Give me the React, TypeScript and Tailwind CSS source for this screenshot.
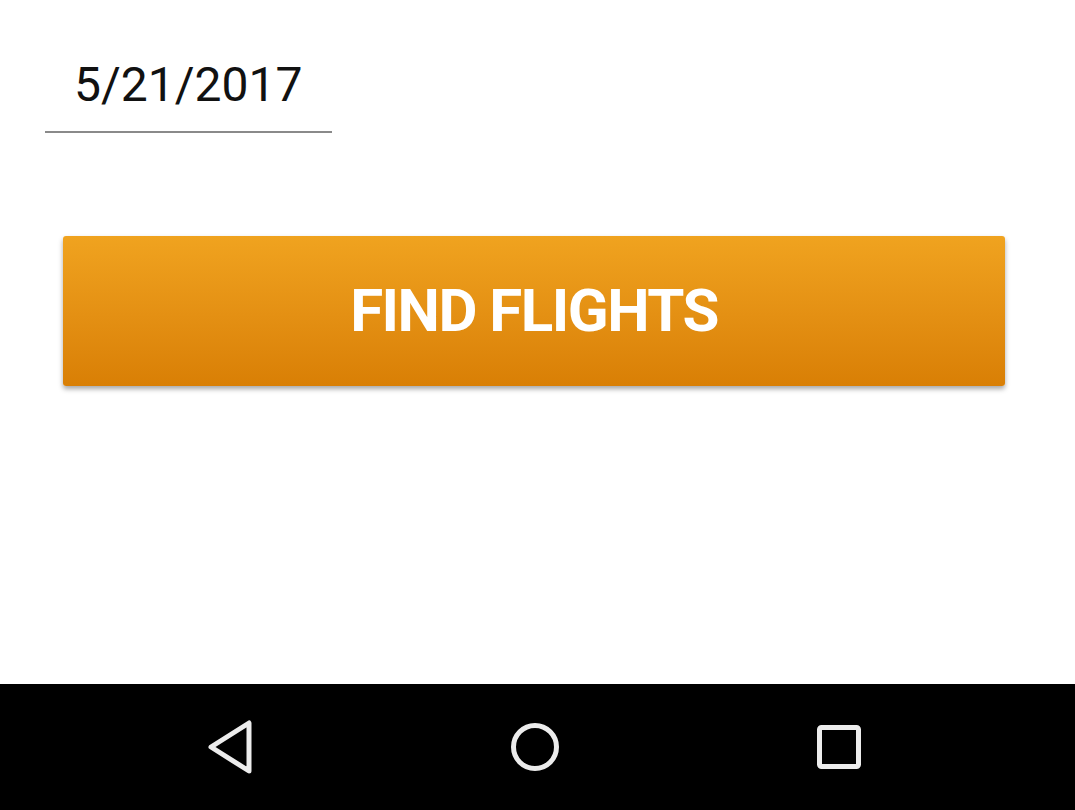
export default function App() {
  return (
    <div className="flex h-[810px] w-[1075px] flex-col bg-white font-['Roboto',sans-serif]">
      <main className="flex-1">
        <div className="ml-[45px] mt-[54px] w-[287px] border-b-2 border-[#8a8a8a] pb-[15px] pl-[29px]">
          <span className="block text-[48px] leading-[62px] text-[#111]">5/21/2017</span>
        </div>

        <div className="mx-[63px] mt-[103px] w-[942px]">
          <button className="flex h-[150px] w-full items-center justify-center rounded-[3px] bg-gradient-to-b from-[#f0a31f] to-[#d97f05] shadow-[0_3px_5px_rgba(0,0,0,0.35)]">
            <span className="text-[60px] font-bold leading-none tracking-[-1.5px] text-white">FIND FLIGHTS</span>
          </button>
        </div>
      </main>

      <nav className="flex h-[126px] items-center justify-center bg-black pr-[5px]">
        <div className="flex w-[304px] justify-center">
          <svg width="48" height="54" viewBox="0 0 48 54" fill="none" stroke="#ececec" strokeWidth="5" strokeLinejoin="round" strokeLinecap="round">
            <path d="M42 3 L42 51 L4 27 Z" />
          </svg>
        </div>
        <div className="flex w-[304px] justify-center">
          <svg width="50" height="50" viewBox="0 0 50 50" fill="none" stroke="#ececec" strokeWidth="5">
            <circle cx="25" cy="25" r="21.5" />
          </svg>
        </div>
        <div className="flex w-[304px] justify-center">
          <svg width="44" height="44" viewBox="0 0 44 44" fill="none" stroke="#ececec" strokeWidth="5">
            <rect x="2.5" y="2.5" width="39" height="39" rx="2" />
          </svg>
        </div>
      </nav>
    </div>
  );
}
